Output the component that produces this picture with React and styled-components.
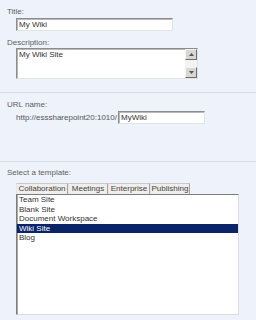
import React from "react";
import styled, { createGlobalStyle } from "styled-components";

const Global = createGlobalStyle`
  html, body { margin: 0; padding: 0; background: #edf2fb; }
  body { font-family: "Liberation Sans", Arial, sans-serif; }
  * { box-sizing: border-box; }
`;

const Page = styled.div`
  width: 256px;
  height: 320px;
  background: #edf2fb;
  display: flex;
  flex-direction: column;
  font-size: 8px;
  overflow: hidden;
`;

const Section = styled.section`
  height: ${(p) => p.$h}px;
  flex: ${(p) => (p.$grow ? "1" : "none")};
  padding: ${(p) => p.$pt}px 7px 0 7px;
  border-bottom: ${(p) => (p.$last ? "none" : "1px solid #d6dee9")};
  display: flex;
  flex-direction: column;
`;

const Label = styled.div`
  color: #5f5f5f;
  font-size: 8px;
  line-height: 10px;
  height: 10px;
  margin-top: ${(p) => p.$mt || 0}px;
  white-space: nowrap;
`;

const Field = styled.div`
  margin-left: 9px;
  margin-top: ${(p) => p.$mt || 0}px;
  display: flex;
  align-items: center;
`;

const TextBox = styled.div`
  width: ${(p) => p.$w}px;
  height: 13px;
  background: #fff;
  border: 1px solid;
  border-color: #8c8c8c #e2e2e2 #e2e2e2 #8c8c8c;
  box-shadow: inset 1px 1px 0 #b9b9b9;
  color: #333;
  font-size: 8px;
  line-height: 11px;
  padding-left: 2px;
  white-space: nowrap;
`;

const TextArea = styled.div`
  width: 182px;
  height: 31px;
  border: 1px solid;
  border-color: #8c8c8c #e2e2e2 #e2e2e2 #8c8c8c;
  box-shadow: inset 1px 1px 0 #b9b9b9;
  display: flex;
  background: #fff;
`;

const AreaText = styled.div`
  flex: 1;
  color: #333;
  font-size: 8px;
  line-height: 10px;
  padding: 1px 0 0 2px;
`;

const ScrollBar = styled.div`
  width: 12px;
  display: flex;
  flex-direction: column;
  justify-content: space-between;
  background: #f3f3f1;
`;

const ScrollButton = styled.div`
  height: 11px;
  background: #d8d7d2;
  border: 1px solid;
  border-color: #f4f4f4 #6e6e6e #6e6e6e #f4f4f4;
  display: flex;
  align-items: center;
  justify-content: center;
`;

const UrlText = styled.span`
  color: #555;
  font-size: 8px;
  white-space: nowrap;
  margin-right: 1px;
`;

const Tabs = styled.div`
  margin-left: 9px;
  margin-top: 5px;
  display: flex;
  height: 11px;
`;

const Tab = styled.div`
  width: ${(p) => p.$w}px;
  height: 11px;
  background: #efeeea;
  border: 1px solid;
  border-color: #c9c9c9 #a4a4a4 transparent #e6e6e6;
  border-bottom: none;
  color: #444;
  font-size: 8px;
  line-height: 10px;
  text-align: center;
  white-space: nowrap;
  overflow: hidden;
`;

const ListBox = styled.div`
  margin-left: 9px;
  width: 223px;
  height: 121px;
  background: #fff;
  border: 1px solid;
  border-color: #7d7d7d #dcdcdc #dcdcdc #7d7d7d;
  box-shadow: inset 1px 0 0 #a8a8a8;
`;

const Item = styled.div`
  height: 9.5px;
  line-height: 9.5px;
  font-size: 8px;
  padding-left: 2px;
  color: ${(p) => (p.$selected ? "#ffffff" : "#333")};
  background: ${(p) => (p.$selected ? "#0b2468" : "transparent")};
  white-space: nowrap;
`;

const Arrow = ({ down }) => (
  <svg width="5" height="3" viewBox="0 0 5 3">
    <path d={down ? "M0 0 L5 0 L2.5 3 Z" : "M0 3 L5 3 L2.5 0 Z"} fill="#555" />
  </svg>
);

const templates = ["Team Site", "Blank Site", "Document Workspace", "Wiki Site", "Blog"];
const tabs = [
  { name: "Collaboration", w: 52 },
  { name: "Meetings", w: 40 },
  { name: "Enterprise", w: 42 },
  { name: "Publishing", w: 40 },
];

export default function App() {
  return (
    <>
      <Global />
      <Page>
        <Section $h={93} $pt={7}>
          <Label>Title:</Label>
          <Field $mt={1}>
            <TextBox $w={157}>My Wiki</TextBox>
          </Field>
          <Label $mt={7}>Description:</Label>
          <Field>
            <TextArea>
              <AreaText>My Wiki Site</AreaText>
              <ScrollBar>
                <ScrollButton>
                  <Arrow />
                </ScrollButton>
                <ScrollButton>
                  <Arrow down />
                </ScrollButton>
              </ScrollBar>
            </TextArea>
          </Field>
        </Section>
        <Section $h={69} $pt={7}>
          <Label>URL name:</Label>
          <Field $mt={1}>
            <UrlText>http://esssharepoint20:1010/</UrlText>
            <TextBox $w={87}>MyWiki</TextBox>
          </Field>
        </Section>
        <Section $grow $last $pt={6}>
          <Label>Select a template:</Label>
          <Tabs>
            {tabs.map((t) => (
              <Tab key={t.name} $w={t.w}>
                {t.name}
              </Tab>
            ))}
          </Tabs>
          <ListBox>
            {templates.map((t) => (
              <Item key={t} $selected={t === "Wiki Site"}>
                {t}
              </Item>
            ))}
          </ListBox>
        </Section>
      </Page>
    </>
  );
}
